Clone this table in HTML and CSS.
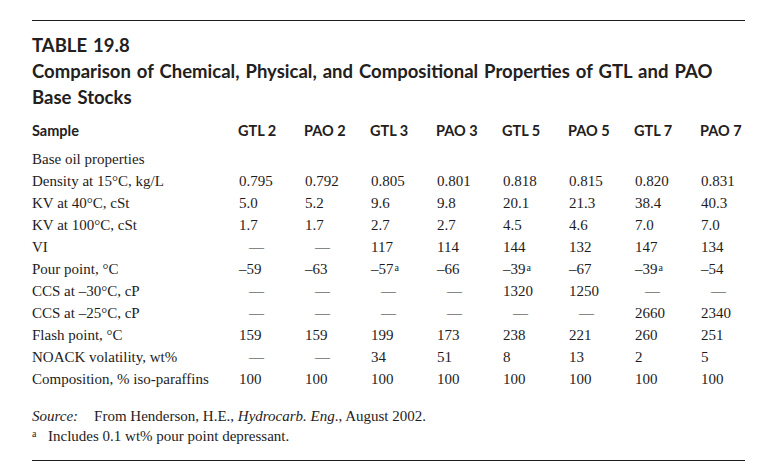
FILE: index.html
```html
<!DOCTYPE html>
<html>
<head>
<meta charset="utf-8">
<link rel="stylesheet" href="styles.css">
</head>
<body>
<div class="page">
  <div class="rule"></div>
  <div class="caption">
    <div class="cap-line">TABLE 19.8</div>
    <div class="cap-line">Comparison of Chemical, Physical, and Compositional Properties of GTL and PAO</div>
    <div class="cap-line">Base Stocks</div>
  </div>
  <div class="thead">
    <div class="label">Sample</div>
    <div class="hc">GTL 2</div><div class="hc">PAO 2</div><div class="hc">GTL 3</div><div class="hc">PAO 3</div>
    <div class="hc">GTL 5</div><div class="hc">PAO 5</div><div class="hc">GTL 7</div><div class="hc">PAO 7</div>
  </div>
  <div class="tbody">
    <div class="label">Base oil properties</div><div></div><div></div><div></div><div></div><div></div><div></div><div></div><div></div>

    <div class="label">Density at 15°C, kg/L</div>
    <div>0.795</div><div>0.792</div><div>0.805</div><div>0.801</div><div>0.818</div><div>0.815</div><div>0.820</div><div>0.831</div>

    <div class="label">KV at 40°C, cSt</div>
    <div>5.0</div><div>5.2</div><div>9.6</div><div>9.8</div><div>20.1</div><div>21.3</div><div>38.4</div><div>40.3</div>

    <div class="label">KV at 100°C, cSt</div>
    <div>1.7</div><div>1.7</div><div>2.7</div><div>2.7</div><div>4.5</div><div>4.6</div><div>7.0</div><div>7.0</div>

    <div class="label">VI</div>
    <div class="dash">—</div><div class="dash">—</div><div>117</div><div>114</div><div>144</div><div>132</div><div>147</div><div>134</div>

    <div class="label">Pour point, °C</div>
    <div>–59</div><div>–63</div><div>–57<sup>a</sup></div><div>–66</div><div>–39<sup>a</sup></div><div>–67</div><div>–39<sup>a</sup></div><div>–54</div>

    <div class="label">CCS at –30°C, cP</div>
    <div class="dash">—</div><div class="dash">—</div><div class="dash">—</div><div class="dash">—</div><div>1320</div><div>1250</div><div class="dash">—</div><div class="dash">—</div>

    <div class="label">CCS at –25°C, cP</div>
    <div class="dash">—</div><div class="dash">—</div><div class="dash">—</div><div class="dash">—</div><div class="dash">—</div><div class="dash">—</div><div>2660</div><div>2340</div>

    <div class="label">Flash point, °C</div>
    <div>159</div><div>159</div><div>199</div><div>173</div><div>238</div><div>221</div><div>260</div><div>251</div>

    <div class="label">NOACK volatility, wt%</div>
    <div class="dash">—</div><div class="dash">—</div><div>34</div><div>51</div><div>8</div><div>13</div><div>2</div><div>5</div>

    <div class="label">Composition, % iso-paraffins</div>
    <div>100</div><div>100</div><div>100</div><div>100</div><div>100</div><div>100</div><div>100</div><div>100</div>
  </div>
  <div class="notes">
    <div class="note"><span class="src">Source:</span>From Henderson, H.E., <i>Hydrocarb. Eng</i>., August 2002.</div>
    <div class="note"><span class="fn">a</span>Includes 0.1 wt% pour point depressant.</div>
  </div>
  <div class="rule bottom"></div>
</div>
</body>
</html>
```

FILE: styles.css
```css
html, body {
  margin: 0;
  padding: 0;
  background: #ffffff;
}
.page {
  width: 713px;
  padding: 20px 0 0 32px;
  color: #1e1c1c;
}
.rule {
  border-top: 1.3px solid #1e1e1e;
}
.caption {
  margin-top: 11px;
  font-family: Lato, "Open Sans", sans-serif;
  font-weight: 700;
  font-size: 18.5px;
  line-height: 26px;
  word-spacing: 1.5px;
  color: #222020;
  white-space: nowrap;
}
.thead, .tbody {
  display: grid;
  grid-template-columns: 207px repeat(8, 66px);
}
.thead {
  margin-top: 11px;
  font-family: Lato, "Open Sans", sans-serif;
  font-weight: 700;
  font-size: 14.5px;
  line-height: 20px;
  color: #222020;
}
.thead .hc {
  margin-left: -1px;
}
.tbody {
  margin-top: 7px;
  font-family: "Liberation Serif", serif;
  font-size: 15px;
  line-height: 22px;
}
.tbody .dash {
  padding-left: 10px;
}
sup {
  font-size: 10px;
  vertical-align: 3px;
  line-height: 0;
  margin-left: 1px;
}
.notes {
  margin-top: 16px;
  font-family: "Liberation Serif", serif;
  font-size: 15px;
  line-height: 20px;
}
.src {
  font-style: italic;
  margin-right: 16px;
}
.fn {
  display: inline-block;
  font-size: 10px;
  vertical-align: 4px;
  line-height: 0;
  width: 16px;
}
.bottom {
  margin-top: 14px;
}
```
